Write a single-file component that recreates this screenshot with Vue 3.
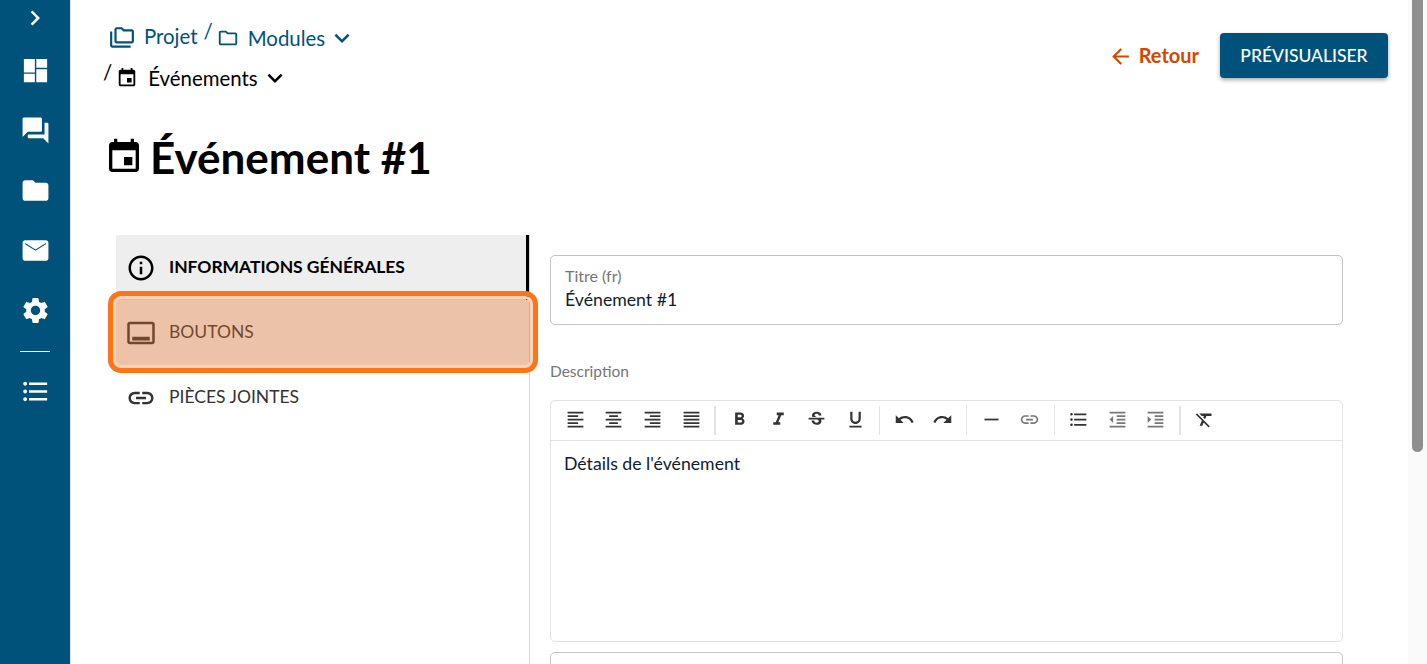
<script setup>
import { ref } from 'vue'

defineOptions({
  name: 'EventEditView'
})

const icons = {
  chevronRight: 'M10 6L8.59 7.41 13.17 12l-4.58 4.59L10 18l6-6z',
  dashboard: 'M3 13.5h8.5V3H3zM3 21h8.5v-6.4H3zM12.6 21H21V11H12.6zM12.6 3v6.9H21V3z',
  forum: 'M21 6h-2v9H6v2c0 .55.45 1 1 1h11l4 4V7c0-.55-.45-1-1-1zm-4 6V3c0-.55-.45-1-1-1H3c-.55 0-1 .45-1 1v14l4-4h10c.55 0 1-.45 1-1z',
  folder: 'M10 4H4c-1.1 0-1.99.9-1.99 2L2 18c0 1.1.9 2 2 2h16c1.1 0 2-.9 2-2V8c0-1.1-.9-2-2-2h-8l-2-2z',
  email: 'M20 4H4c-1.1 0-1.99.9-1.99 2L2 18c0 1.1.9 2 2 2h16c1.1 0 2-.9 2-2V6c0-1.1-.9-2-2-2zm0 3.2l-8 5-8-5V6.2l8 5 8-5v1z',
  settings: 'M19.14 12.94c.04-.3.06-.61.06-.94 0-.32-.02-.64-.07-.94l2.03-1.58c.18-.14.23-.41.12-.61l-1.92-3.32c-.12-.22-.37-.29-.59-.22l-2.39.96c-.5-.38-1.03-.7-1.62-.94l-.36-2.54c-.04-.24-.24-.41-.48-.41h-3.84c-.24 0-.43.17-.47.41l-.36 2.54c-.59.24-1.13.57-1.62.94l-2.39-.96c-.22-.08-.47 0-.59.22L2.74 8.87c-.12.21-.08.47.12.61l2.03 1.58c-.05.3-.09.63-.09.94s.02.64.07.94l-2.03 1.58c-.18.14-.23.41-.12.61l1.92 3.32c.12.22.37.29.59.22l2.39-.96c.5.38 1.03.7 1.62.94l.36 2.54c.05.24.24.41.48.41h3.84c.24 0 .44-.17.47-.41l.36-2.54c.59-.24 1.13-.56 1.62-.94l2.39.96c.22.08.47 0 .59-.22l1.92-3.32c.12-.22.07-.47-.12-.61l-2.01-1.58zM12 15.6c-1.98 0-3.6-1.62-3.6-3.6s1.62-3.6 3.6-3.6 3.6 1.62 3.6 3.6-1.62 3.6-3.6 3.6z',
  list: 'M4 10.5c-.83 0-1.5.67-1.5 1.5s.67 1.5 1.5 1.5 1.5-.67 1.5-1.5-.67-1.5-1.5-1.5zm0-6c-.83 0-1.5.67-1.5 1.5S3.17 7.5 4 7.5 5.5 6.83 5.5 6 4.83 4.5 4 4.5zm0 12c-.83 0-1.5.68-1.5 1.5s.68 1.5 1.5 1.5 1.5-.68 1.5-1.5-.67-1.5-1.5-1.5zM7 19h14v-2H7v2zm0-6h14v-2H7v2zm0-8v2h14V5H7z',
  folderCopy: 'M3 19h17v2H3c-1.1 0-2-.9-2-2V6h2v13zM23 6v9c0 1.1-.9 2-2 2H7c-1.1 0-2-.9-2-2L5.01 4C5.01 2.9 5.9 2 7 2h5l2 2h7c1.1 0 2 .9 2 2zM7 15h14V6h-7.83l-2-2H7v11z',
  folderOutline: 'M9.17 6l2 2H20v10H4V6h5.17M10 4H4c-1.1 0-1.99.9-1.99 2L2 18c0 1.1.9 2 2 2h16c1.1 0 2-.9 2-2V8c0-1.1-.9-2-2-2h-8l-2-2z',
  event: 'M17 12h-5v5h5v-5zM16 1v2H8V1H6v2H5c-1.11 0-1.99.9-1.99 2L3 19c0 1.1.89 2 2 2h14c1.1 0 2-.9 2-2V5c0-1.1-.9-2-2-2h-1V1h-2zm3 18H5V8h14v11z',
  expand: 'M16.59 8.59L12 13.17 7.41 8.59 6 10l6 6 6-6z',
  back: 'M20 11H7.83l5.59-5.59L12 4l-8 8 8 8 1.41-1.41L7.83 13H20v-2z',
  info: 'M11 7h2v2h-2zm0 4h2v6h-2zm1-9C6.48 2 2 6.48 2 12s4.48 10 10 10 10-4.48 10-10S17.52 2 12 2zm0 18c-4.41 0-8-3.59-8-8s3.59-8 8-8 8 3.59 8 8-3.59 8-8 8z',
  action: 'M21 3H3c-1.1 0-2 .9-2 2v14c0 1.1.9 2 2 2h18c1.1 0 2-.9 2-2V5c0-1.1-.9-2-2-2zm0 16H3V5h18v14zM5 15h14v3H5z',
  link: 'M3.9 12c0-1.71 1.39-3.1 3.1-3.1h4V7H7c-2.76 0-5 2.24-5 5s2.24 5 5 5h4v-1.9H7c-1.71 0-3.1-1.39-3.1-3.1zM8 13h8v-2H8v2zm9-6h-4v1.9h4c1.71 0 3.1 1.39 3.1 3.1s-1.39 3.1-3.1 3.1h-4V17h4c2.76 0 5-2.24 5-5s-2.24-5-5-5z'
}

const navTop = [icons.dashboard, icons.forum, icons.folder, icons.email, icons.settings]

const tabs = [
  { label: 'Informations générales', icon: icons.info, active: true },
  { label: 'Boutons', icon: icons.action, active: false },
  { label: 'Pièces jointes', icon: icons.link, active: false }
]

// Editor toolbar, one array per group
const toolbarGroups = [
  [
    { d: 'M15 15H3v2h12v-2zm0-8H3v2h12V7zM3 13h18v-2H3v2zm0 8h18v-2H3v2zM3 3v2h18V3H3z' },
    { d: 'M7 15v2h10v-2H7zm-4 6h18v-2H3v2zm0-8h18v-2H3v2zm4-6v2h10V7H7zM3 3v2h18V3H3z' },
    { d: 'M3 21h18v-2H3v2zm6-4h12v-2H9v2zm-6-4h18v-2H3v2zm6-4h12V7H9v2zM3 3v2h18V3H3z' },
    { d: 'M3 21h18v-2H3v2zm0-4h18v-2H3v2zm0-4h18v-2H3v2zm0-4h18V7H3v2zm0-6v2h18V3H3z' }
  ],
  [
    { d: 'M15.6 10.79c.97-.67 1.65-1.77 1.65-2.79 0-2.26-1.75-4-4-4H7v14h7.04c2.09 0 3.71-1.7 3.71-3.79 0-1.52-.86-2.82-2.15-3.42zM10 6.5h3c.83 0 1.5.67 1.5 1.5s-.67 1.5-1.5 1.5h-3v-3zm3.5 9H10v-3h3.5c.83 0 1.5.67 1.5 1.5s-.67 1.5-1.5 1.5z' },
    { d: 'M10 4v3h2.21l-3.42 8H6v3h8v-3h-2.21l3.42-8H18V4z' },
    { d: 'M6.85 7.08C6.85 4.37 9.45 3 12.24 3c1.64 0 3 .49 3.9 1.28.77.65 1.46 1.73 1.46 3.24h-3.01c0-.31-.05-.59-.15-.85-.29-.86-1.2-1.28-2.25-1.28-1.86 0-2.34 1.02-2.34 1.7 0 .48.25.88.74 1.21.38.25.77.48 1.41.7H7.39c-.21-.34-.54-.89-.54-1.92zM21 12v-2H3v2h9.62c1.15.45 1.96.75 1.96 1.97 0 1-.81 1.67-2.28 1.67-1.54 0-2.93-.54-2.93-2.51H6.4c0 .55.08 1.13.24 1.58.81 2.29 3.29 3.3 5.67 3.3 2.27 0 5.3-.89 5.3-4.05 0-.3-.01-1.16-.48-1.96H21z' },
    { d: 'M12 17c3.31 0 6-2.69 6-6V3h-2.5v8c0 1.93-1.57 3.5-3.5 3.5S8.5 12.93 8.5 11V3H6v8c0 3.31 2.69 6 6 6zm-7 2v2h14v-2H5z' }
  ],
  [
    { d: 'M12.5 8c-2.65 0-5.05.99-6.9 2.6L2 7v9h9l-3.62-3.62c1.39-1.16 3.16-1.88 5.12-1.88 3.54 0 6.55 2.31 7.6 5.5l2.37-.78C21.08 11.03 17.15 8 12.5 8z' },
    { d: 'M18.4 10.6C16.55 8.99 14.15 8 11.5 8c-4.65 0-8.58 3.03-9.96 7.22L3.9 16c1.05-3.19 4.05-5.5 7.6-5.5 1.95 0 3.73.72 5.12 1.88L13 16h9V7l-3.6 3.6z' }
  ],
  [
    { d: 'M4 11h16v2H4z' },
    { d: icons.link, muted: true }
  ],
  [
    { d: icons.list },
    { d: 'M11 17h10v-2H11v2zm-8-5l4 4V8l-4 4zm0 9h18v-2H3v2zM3 3v2h18V3H3zm8 6h10V7H11v2zm0 4h10v-2H11v2z', muted: true },
    { d: 'M3 21h18v-2H3v2zM3 8v8l4-4-4-4zm8 9h10v-2H11v2zM3 3v2h18V3H3zm8 6h10V7H11v2zm0 4h10v-2H11v2z', muted: true }
  ],
  [
    { d: 'M3.27 5L2 6.27l6.97 6.97L6.5 19h3l1.57-3.66L16.73 21 18 19.73 3.55 5.27 3.27 5zM6 5v.18L8.82 8h2.4l-.72 1.68 2.1 2.1L14.21 8H20V5H6z' }
  ]
]

const title = ref('Événement #1')
</script>

<template>
  <div class="page">
    <aside class="sidebar">
      <button class="toggle" type="button">
        <svg viewBox="0 0 24 24" class="toggle-icon"><path :d="icons.chevronRight" /></svg>
      </button>
      <nav class="nav">
        <a v-for="d in navTop" :key="d" class="nav-item">
          <svg viewBox="0 0 24 24"><path :d="d" /></svg>
        </a>
      </nav>
      <div class="nav-divider"></div>
      <a class="nav-item nav-item-last">
        <svg viewBox="0 0 24 24"><path :d="icons.list" /></svg>
      </a>
    </aside>

    <main class="content">
      <header class="topbar">
        <div class="breadcrumb">
          <span class="crumb crumb-first">
            <svg viewBox="0 0 24 24" class="crumb-icon crumb-icon-lg"><path :d="icons.folderCopy" /></svg>
            <span class="crumb-label">Projet</span>
          </span>
          <span class="crumb crumb-second">
            <span class="slash">/</span>
            <svg viewBox="0 0 24 24" class="crumb-icon"><path :d="icons.folderOutline" /></svg>
            <span class="crumb-label">Modules</span>
            <svg viewBox="0 0 24 24" class="crumb-caret"><path :d="icons.expand" /></svg>
          </span>
          <span class="crumb crumb-current">
            <span class="slash">/</span>
            <svg viewBox="0 0 24 24" class="crumb-icon crumb-icon-event"><path :d="icons.event" /></svg>
            <span class="crumb-label">Événements</span>
            <svg viewBox="0 0 24 24" class="crumb-caret"><path :d="icons.expand" /></svg>
          </span>
        </div>
        <div class="actions">
          <a class="back-link">
            <svg viewBox="0 0 24 24"><path :d="icons.back" /></svg>
            Retour
          </a>
          <button class="preview-btn" type="button">Prévisualiser</button>
        </div>
      </header>

      <h1 class="page-title">
        <svg viewBox="0 0 24 24"><path :d="icons.event" /></svg>
        {{ title }}
      </h1>

      <div class="layout">
        <div class="tabs">
          <div
            v-for="tab in tabs"
            :key="tab.label"
            class="tab"
            :class="{ 'tab-active': tab.active }"
          >
            <svg viewBox="0 0 24 24"><path :d="tab.icon" /></svg>
            <span class="tab-label">{{ tab.label }}</span>
          </div>
          <div class="highlight"></div>
        </div>

        <form class="form" @submit.prevent>
          <div class="field">
            <label>Titre (fr)</label>
            <input v-model="title" type="text" />
          </div>

          <div class="field-label">Description</div>
          <div class="editor">
            <div class="toolbar">
              <div v-for="(group, i) in toolbarGroups" :key="i" class="tool-group">
                <button v-for="tool in group" :key="tool.d" class="tool" :class="{ muted: tool.muted }" type="button">
                  <svg viewBox="0 0 24 24"><path :d="tool.d" /></svg>
                </button>
              </div>
            </div>
            <div class="editor-body">Détails de l'événement</div>
          </div>

          <div class="editor editor-next"></div>
        </form>
      </div>
    </main>

    <div class="scrollbar">
      <div class="scrollbar-thumb"></div>
    </div>
  </div>
</template>

<style>
html,
body {
  margin: 0;
  height: 100%;
  overflow: hidden;
}
</style>

<style scoped>
.page {
  display: flex;
  height: 664px;
  overflow: hidden;
  font-family: 'Lato', 'Open Sans', sans-serif;
  color: #000;
  background: #fff;
}

/* Scrollbar */
.scrollbar {
  flex: 0 0 19px;
  background: #fafafa;
}
.scrollbar-thumb {
  width: 11px;
  height: 452px;
  margin-left: 4px;
  background: #8f8f8f;
  border-radius: 0 0 6px 6px;
}

/* Sidebar */
.sidebar {
  flex: 0 0 70px;
  height: 664px;
  background: #00527a;
  border-right: 1px solid #e4e4e4;
  display: flex;
  flex-direction: column;
  align-items: center;
}
.toggle {
  border: none;
  background: none;
  padding: 0;
  height: 36px;
  display: flex;
  align-items: center;
}
.toggle-icon {
  width: 30px;
  height: 30px;
  fill: #fff;
}
.nav {
  display: flex;
  flex-direction: column;
  align-items: center;
  margin-top: 4px;
}
.nav-item {
  height: 60px;
  display: flex;
  align-items: center;
  justify-content: center;
}
.nav-item svg {
  width: 31px;
  height: 31px;
  fill: #fff;
}
.nav-item-last {
  margin-top: 9px;
}
.nav-divider {
  width: 30px;
  height: 1px;
  background: #fff;
  margin: 11px 0 0;
}

/* Top bar */
.content {
  flex: 1;
  min-width: 0;
  height: 975px;
  padding: 0 20px 0 34px;
}
.topbar {
  display: flex;
  justify-content: space-between;
  padding-top: 18px;
}
.breadcrumb {
  width: 270px;
  display: flex;
  flex-wrap: wrap;
  font-size: 20.4px;
  color: #00527a;
}
.crumb {
  display: flex;
  align-items: center;
  height: 40px;
}
.crumb-first {
  padding-left: 4px;
}
.crumb-label {
  margin-left: 10px;
}
.crumb-first .crumb-label {
  margin-left: 9px;
  position: relative;
  top: -2px;
}
.crumb-second .crumb-label {
  margin-left: 9px;
}
.crumb-second .crumb-icon {
  width: 22px;
  height: 22px;
  margin-left: 1px;
}
.crumb-icon {
  width: 24px;
  height: 24px;
  fill: currentColor;
}
.crumb-icon-lg {
  width: 26px;
  height: 26px;
}
.crumb-icon-event {
  width: 22px;
  height: 22px;
}
.crumb-caret {
  width: 30px;
  height: 30px;
  margin-left: 2px;
  fill: currentColor;
}
.crumb-current {
  color: #000;
}
.slash {
  align-self: flex-start;
  margin: 1px 3px 0 6px;
  line-height: 24px;
}
.crumb-current .slash {
  margin: 2px 4px 0 -2px;
}
.actions {
  display: flex;
  align-items: center;
  gap: 21px;
  height: 60px;
  margin-top: 7px;
  align-self: flex-start;
}
.back-link {
  display: flex;
  align-items: center;
  gap: 6px;
  font-size: 20px;
  font-weight: 700;
  color: #d14900;
}
.back-link svg {
  width: 25px;
  height: 25px;
  fill: currentColor;
  position: relative;
  top: 1px;
}
.preview-btn {
  width: 168px;
  height: 45px;
  border: none;
  border-radius: 4px;
  background: #00527a;
  color: #fff;
  font-family: inherit;
  font-size: 17.5px;
  font-weight: 500;
  text-transform: uppercase;
  box-shadow: 0 2px 4px rgba(0, 0, 0, 0.35);
}

/* Title */
.page-title {
  display: flex;
  align-items: center;
  gap: 6px;
  margin: 29px 0 0;
  font-size: 44px;
  line-height: 60px;
  font-weight: 700;
}
.page-title svg {
  width: 40px;
  height: 40px;
  margin-left: -1px;
  fill: #000;
}

/* Tabs + form */
.layout {
  display: flex;
  margin-top: 48px;
  padding-left: 11px;
}
.tabs {
  position: relative;
  flex: 0 0 414px;
  box-sizing: border-box;
  border-right: 1px solid #d8d8d8;
  min-height: 500px;
}
.tab {
  display: flex;
  align-items: center;
  gap: 13px;
  height: 65px;
  padding-left: 10px;
  font-size: 17.5px;
  text-transform: uppercase;
  color: #333;
}
.tab svg {
  width: 30px;
  height: 30px;
  fill: currentColor;
}
.tab-label {
  margin-bottom: 2px;
}
.tab-active {
  background: #eee;
  color: #000;
  font-weight: 700;
  letter-spacing: -0.05px;
  box-shadow: inset -3px 0 0 #000;
}
.highlight {
  position: absolute;
  left: -8px;
  top: 56px;
  width: 430px;
  height: 82px;
  box-sizing: border-box;
  border: 5px solid #fd7519;
  border-radius: 13px;
  background: rgba(207, 105, 40, 0.4);
  box-shadow: inset 0 0 0 3px #fbd4b8;
}
.form {
  flex: 1;
  max-width: 793px;
  margin-left: 20px;
  padding-top: 20px;
}
.field {
  box-sizing: border-box;
  height: 70px;
  border: 1px solid #c4c4c4;
  border-radius: 5px;
  padding: 11px 14px;
}
.field label {
  display: block;
  font-size: 16px;
  line-height: 18px;
  color: #757575;
}
.field input {
  display: block;
  width: 100%;
  border: none;
  outline: none;
  padding: 0;
  margin-top: 3px;
  font-family: inherit;
  font-size: 17.7px;
  line-height: 24px;
  color: #0f1c2c;
}
.field-label {
  margin-top: 37px;
  font-size: 15.5px;
  line-height: 18px;
  color: #757575;
}
.editor {
  box-sizing: border-box;
  margin-top: 20px;
  height: 242px;
  border: 1px solid #e2e2e2;
  border-radius: 5px;
}
.editor-next {
  margin-top: 10px;
  height: 120px;
  border-color: #c4c4c4;
}
.toolbar {
  display: flex;
  align-items: center;
  height: 39px;
  padding-left: 5px;
  border-bottom: 1px solid #e2e2e2;
}
.tool-group {
  display: flex;
  height: 29px;
  padding-right: 4px;
  margin-right: 4px;
  border-right: 2px solid #e2e2e2;
}
.tool-group:last-child {
  border-right: none;
}
.tool-group:nth-child(2),
.tool-group:nth-child(3),
.tool-group:nth-child(4) {
  padding-right: 4.5px;
  margin-right: 4.5px;
  border-right-width: 1px;
}
.tool {
  width: 38.6px;
  height: 27px;
  border: none;
  background: none;
  padding: 0;
  display: flex;
  align-items: center;
  justify-content: center;
}
.tool svg {
  width: 21px;
  height: 21px;
  fill: #333;
}
.tool.muted svg {
  fill: #777;
}
.editor-body {
  padding: 12px 13px;
  font-size: 17.7px;
  line-height: 22px;
  color: #0f1c2c;
}
</style>
